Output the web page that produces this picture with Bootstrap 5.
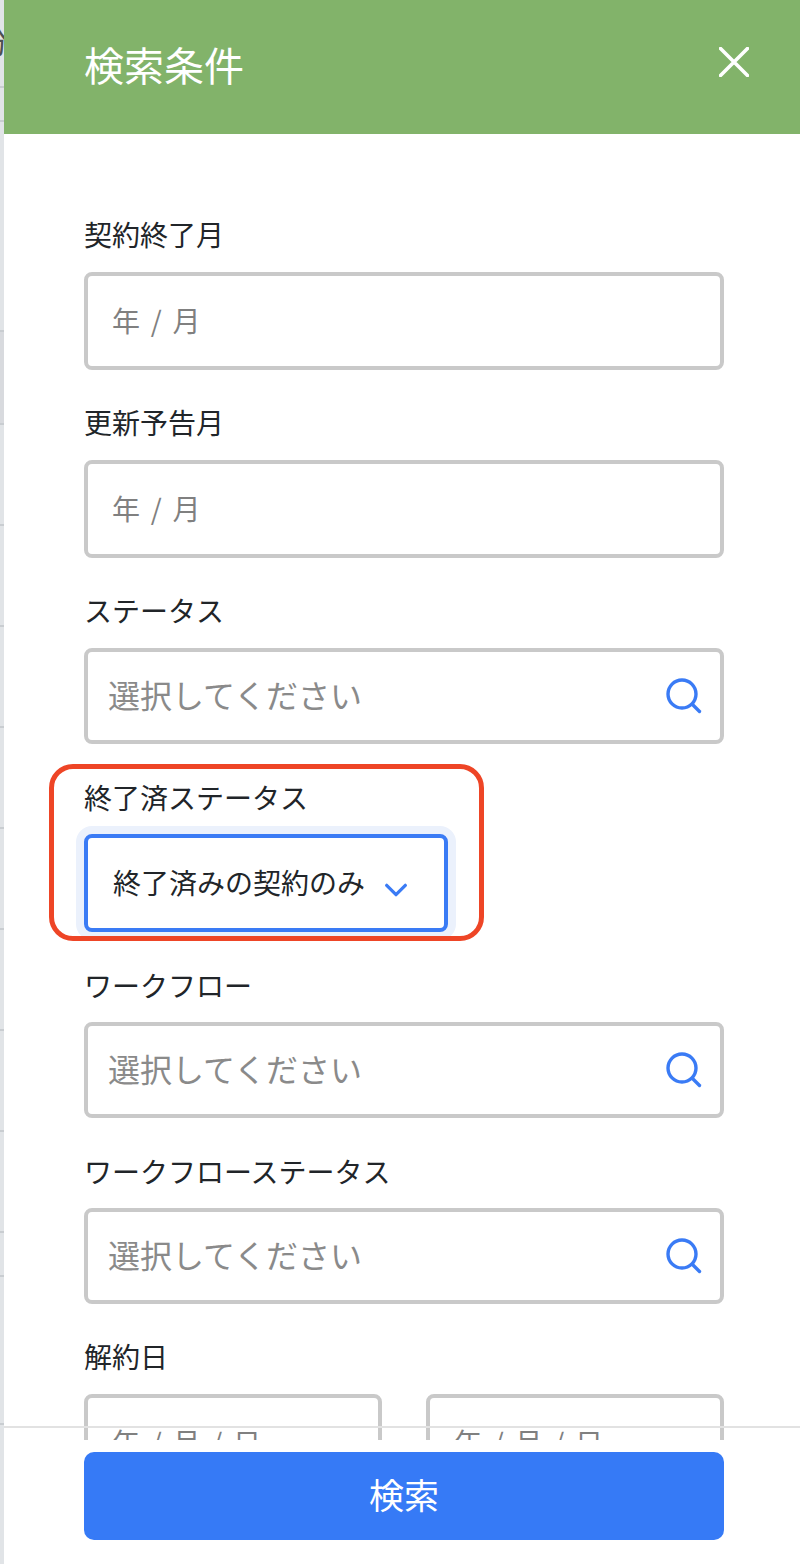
<!DOCTYPE html>
<html lang="ja">
<head>
<meta charset="utf-8">
<title>検索条件</title>
<link href="https://cdn.jsdelivr.net/npm/bootstrap@5.3.0/dist/css/bootstrap.min.css" rel="stylesheet">
<style>
html,body{height:100%;overflow:hidden;}
body{font-family:"Noto Sans CJK JP",sans-serif;color:#212529;background:#fff;}
.app-shell{width:800px;height:1564px;}
.bg-strip{width:4px;background:#e1e4e7;overflow:hidden;}
.tick{border-bottom:2px solid #c9cdd1;overflow:hidden;}
.tick-glyph{height:88px;padding-top:22px;color:#4d5054;font-size:30px;line-height:36px;}
.tick-glyph span{display:block;width:30px;margin-left:-21px;}
.tick-34{height:34px;}
.tick-dark{height:93px;background:#d8dade;}
.tick-210{height:210px;}
.tick-101{height:101px;}
.tick-44{height:44px;}
.tick-148{height:148px;}
.side-panel{min-width:0;background:#fff;}
.panel-head{height:134px;background:#82b36a;padding:0 51px 0 80px;color:#fff;}
.panel-title{font-size:40px;font-weight:400;line-height:56px;margin:0 0 6px;}
.close-x{width:30px;height:30px;margin-bottom:10px;}
.form-scroll{height:1306px;padding:82px 76px 0 80px;overflow:hidden;}
.fld{margin-bottom:34px;}
.fld-tight{margin-bottom:33px;}
.fld-label{display:block;font-size:28px;line-height:36px;padding-bottom:4px;margin-bottom:16px;}
.fld-label.fld-label-17{padding:2px 0;margin-bottom:17px;}
.form-control.date-in,.form-select.drop-in{height:98px;border:4px solid #c9c9c9;border-radius:8px;font-size:28px;padding:0 24px 2px;color:#212529;box-shadow:none;font-family:inherit;word-spacing:4.5px;}
.form-control.date-in::placeholder{color:#808080;opacity:1;}
.pick-box{height:96px;border:4px solid #c9c9c9;border-radius:8px;padding:0 20px;}
.pick-in{border:0;outline:0;padding:0 0 4px;min-width:0;background:transparent;font-size:32px;font-family:inherit;}
.pick-in::placeholder{color:#8a8a8a;opacity:1;}
.pick-icon{width:38px;height:38px;margin-right:-3px;margin-left:auto;flex:none;}
.marked{position:relative;}
.mark-frame{position:absolute;left:-35px;top:-13px;width:435px;height:177px;border:5px solid #ee4526;border-radius:24px;pointer-events:none;}
.form-select.drop-in{width:364px;padding:0 25px 2px;border-color:#3a7bf5;box-shadow:0 0 0 8px #ebf1fc;background-image:url("data:image/svg+xml,%3Csvg xmlns='http://www.w3.org/2000/svg' viewBox='0 0 20 12'%3E%3Cpath d='M2 2l8 8 8-8' fill='none' stroke='%233a7bf5' stroke-width='2.8' stroke-linecap='round' stroke-linejoin='round'/%3E%3C/svg%3E");background-size:24px 14px;background-position:right 36px top 45px;}
.tilde{width:44px;font-size:28px;color:#808080;padding-bottom:4px;}
.date-half{width:298px;flex:none;}
.panel-foot{position:relative;height:124px;padding:12px 76px 0 80px;background:#fff;}
.foot-line{position:absolute;left:0;right:0;top:-14px;height:2px;background:#e2e2e2;}
.btn.go-btn{height:88px;background:#367af6;border:0;border-radius:10px;font-size:35px;color:#fff;line-height:1;padding:0 0 6px;}
</style>
</head>
<body>
<div class="app-shell d-flex">
  <div class="bg-strip flex-shrink-0">
    <div class="tick tick-glyph"><span>分</span></div>
    <div class="tick tick-34"></div>
    <div class="tick tick-210"></div>
    <div class="tick tick-dark"></div>
    <div class="tick tick-101"></div>
    <div class="tick tick-101"></div>
    <div class="tick tick-101"></div>
    <div class="tick tick-101"></div>
    <div class="tick tick-101"></div>
    <div class="tick tick-101"></div>
    <div class="tick tick-101"></div>
    <div class="tick tick-101"></div>
    <div class="tick tick-44"></div>
    <div class="tick tick-148"></div>
  </div>
  <div class="side-panel flex-grow-1 d-flex flex-column">
    <header class="panel-head d-flex align-items-center justify-content-between flex-shrink-0">
      <h1 class="panel-title">検索条件</h1>
      <svg class="close-x" viewBox="0 0 30 30" aria-label="閉じる"><path d="M1.5 1.5l27 27M28.5 1.5l-27 27" fill="none" stroke="#fff" stroke-width="3.6" stroke-linecap="round"/></svg>
    </header>
    <form class="form-scroll flex-shrink-0">
      <div class="fld">
        <label class="fld-label">契約終了月</label>
        <input class="form-control date-in" type="text" placeholder="年 / 月">
      </div>
      <div class="fld">
        <label class="fld-label">更新予告月</label>
        <input class="form-control date-in" type="text" placeholder="年 / 月">
      </div>
      <div class="fld-tight">
        <label class="fld-label">ステータス</label>
        <div class="pick-box d-flex align-items-center">
          <input class="pick-in flex-grow-1" type="text" placeholder="選択してください">
          <svg class="pick-icon" viewBox="0 0 38 38"><circle cx="17" cy="17" r="14" fill="none" stroke="#3a7bf5" stroke-width="3.4"/><path d="M27.5 27.5l7 7" fill="none" stroke="#3a7bf5" stroke-width="3.4" stroke-linecap="round"/></svg>
        </div>
      </div>
      <div class="fld-tight marked">
        <div class="mark-frame"></div>
        <label class="fld-label fld-label-17">終了済ステータス</label>
        <select class="form-select drop-in"><option>終了済みの契約のみ</option></select>
      </div>
      <div class="fld-tight">
        <label class="fld-label fld-label-17">ワークフロー</label>
        <div class="pick-box d-flex align-items-center">
          <input class="pick-in flex-grow-1" type="text" placeholder="選択してください">
          <svg class="pick-icon" viewBox="0 0 38 38"><circle cx="17" cy="17" r="14" fill="none" stroke="#3a7bf5" stroke-width="3.4"/><path d="M27.5 27.5l7 7" fill="none" stroke="#3a7bf5" stroke-width="3.4" stroke-linecap="round"/></svg>
        </div>
      </div>
      <div class="fld">
        <label class="fld-label fld-label-17">ワークフローステータス</label>
        <div class="pick-box d-flex align-items-center">
          <input class="pick-in flex-grow-1" type="text" placeholder="選択してください">
          <svg class="pick-icon" viewBox="0 0 38 38"><circle cx="17" cy="17" r="14" fill="none" stroke="#3a7bf5" stroke-width="3.4"/><path d="M27.5 27.5l7 7" fill="none" stroke="#3a7bf5" stroke-width="3.4" stroke-linecap="round"/></svg>
        </div>
      </div>
      <div class="fld">
        <label class="fld-label">解約日</label>
        <div class="d-flex align-items-center">
          <input class="form-control date-in date-half" type="text" placeholder="年 / 月 / 日">
          <span class="tilde text-center">~</span>
          <input class="form-control date-in date-half" type="text" placeholder="年 / 月 / 日">
        </div>
      </div>
    </form>
    <footer class="panel-foot flex-shrink-0">
      <div class="foot-line"></div>
      <button class="btn go-btn w-100" type="button">検索</button>
    </footer>
  </div>
</div>
<script src="https://cdn.jsdelivr.net/npm/bootstrap@5.3.0/dist/js/bootstrap.bundle.min.js"></script>
</body>
</html>
